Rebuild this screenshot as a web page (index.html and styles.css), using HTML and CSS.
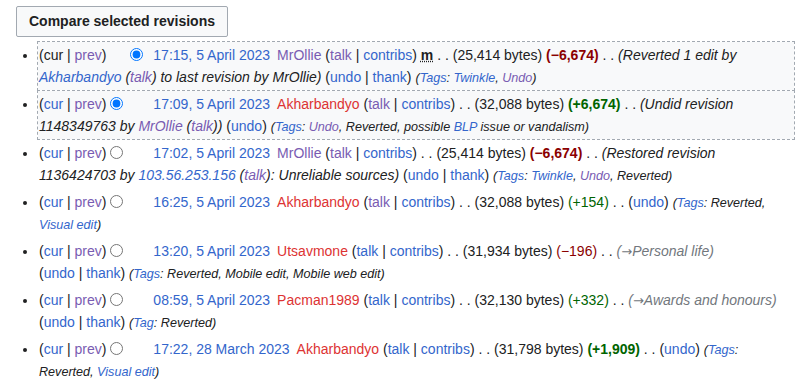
FILE: index.html
```html
<!DOCTYPE html>
<html lang="en">
<head>
	<meta charset="UTF-8">
	<meta name="viewport" content="width=device-width, initial-scale=1.0">
	<title>Revision history</title>
	<link rel="stylesheet" href="styles.css">
</head>
<body>
	<form class="historico">
		<button type="button" class="btn-comparar">Compare selected revisions</button>
		<ul class="revisoes">
			<li class="selecionada">
				(cur | <a class="vis">prev</a>)<input type="radio" name="oldid" class="oculto"><input type="radio" name="diff" checked>
				<a class="data">17:15, 5 April 2023</a><span class="usuario"><a class="vis">MrOllie</a> (<a class="vis">talk</a> | <a>contribs</a>)</span>
				<abbr class="menor">m</abbr> . . (25,414 bytes) <strong class="menos">(−6,674)</strong> . .
				<span class="comentario">(Reverted 1 edit by <a>Akharbandyo</a> (<a class="vis">talk</a>) to last revision by MrOllie)</span>
				<span class="desfazer">(<a>undo</a> | <a>thank</a>)</span>
				<span class="tags">(<a>Tags</a>: <a>Twinkle</a>, <a class="vis">Undo</a>)</span>
			</li>
			<li class="selecionada">
				(<a>cur</a> | <a class="vis">prev</a>)<input type="radio" name="oldid" checked><input type="radio" name="diff" class="oculto">
				<a class="data">17:09, 5 April 2023</a><span class="usuario"><a class="novo">Akharbandyo</a> (<a class="vis">talk</a> | <a>contribs</a>)</span>
				. . (32,088 bytes) <strong class="mais">(+6,674)</strong> . .
				<span class="comentario">(Undid revision 1148349763 by <a class="vis">MrOllie</a> (<a class="vis">talk</a>))</span>
				<span class="desfazer">(<a>undo</a>)</span>
				<span class="tags">(<a>Tags</a>: <a class="vis">Undo</a>, Reverted, possible <a>BLP</a> issue or vandalism)</span>
			</li>
			<li>
				(<a>cur</a> | <a class="vis">prev</a>)<input type="radio" name="oldid"><input type="radio" name="diff" class="oculto">
				<a class="data">17:02, 5 April 2023</a><span class="usuario"><a class="vis">MrOllie</a> (<a class="vis">talk</a> | <a>contribs</a>)</span>
				. . (25,414 bytes) <strong class="menos">(−6,674)</strong> . .
				<span class="comentario">(Restored revision 1136424703 by <a>103.56.253.156</a> (<a class="vis">talk</a>): Unreliable sources)</span>
				<span class="desfazer">(<a>undo</a> | <a>thank</a>)</span>
				<span class="tags">(<a>Tags</a>: <a>Twinkle</a>, <a class="vis">Undo</a>, Reverted)</span>
			</li>
			<li>
				(<a>cur</a> | <a class="vis">prev</a>)<input type="radio" name="oldid"><input type="radio" name="diff" class="oculto">
				<a class="data">16:25, 5 April 2023</a><span class="usuario"><a class="novo">Akharbandyo</a> (<a class="vis">talk</a> | <a>contribs</a>)</span>
				. . (32,088 bytes) <span class="mais">(+154)</span> . .
				<span class="desfazer">(<a>undo</a>)</span>
				<span class="tags">(<a>Tags</a>: Reverted, <a>Visual edit</a>)</span>
			</li>
			<li>
				(<a>cur</a> | <a class="vis">prev</a>)<input type="radio" name="oldid"><input type="radio" name="diff" class="oculto">
				<a class="data">13:20, 5 April 2023</a><span class="usuario"><a class="novo">Utsavmone</a> (<a>talk</a> | <a>contribs</a>)</span>
				. . (31,934 bytes) <span class="menos">(−196)</span> . .
				<span class="comentario auto">(<a class="seta">→</a>Personal life)</span>
				<span class="desfazer">(<a>undo</a> | <a>thank</a>)</span>
				<span class="tags">(<a>Tags</a>: Reverted, Mobile edit, Mobile web edit)</span>
			</li>
			<li>
				(<a>cur</a> | <a class="vis">prev</a>)<input type="radio" name="oldid"><input type="radio" name="diff" class="oculto">
				<a class="data">08:59, 5 April 2023</a><span class="usuario"><a class="novo">Pacman1989</a> (<a>talk</a> | <a>contribs</a>)</span>
				. . (32,130 bytes) <span class="mais">(+332)</span> . .
				<span class="comentario auto">(<a class="seta">→</a>Awards and honours)</span>
				<span class="desfazer">(<a>undo</a> | <a>thank</a>)</span>
				<span class="tags">(<a>Tag</a>: Reverted)</span>
			</li>
			<li>
				(<a>cur</a> | <a class="vis">prev</a>)<input type="radio" name="oldid"><input type="radio" name="diff" class="oculto">
				<a class="data">17:22, 28 March 2023</a><span class="usuario"><a class="novo">Akharbandyo</a> (<a>talk</a> | <a>contribs</a>)</span>
				. . (31,798 bytes) <strong class="mais">(+1,909)</strong> . .
				<span class="desfazer">(<a>undo</a>)</span>
				<span class="tags">(<a>Tags</a>: Reverted, <a>Visual edit</a>)</span>
			</li>
		</ul>
	</form>
</body>
</html>
```

FILE: styles.css
```css
* {
	box-sizing: border-box;
}
body {
	margin: 0;
	padding: 6px 16px 0;
	font-family: "Liberation Sans", Arial, sans-serif;
	font-size: 14px;
	color: #202122;
	background-color: white;
}
a {
	color: #3366cc;
	text-decoration: none;
	cursor: pointer;
}
a.vis {
	color: #795cb2;
}
a.novo {
	color: #dd3333;
}
.btn-comparar {
	font-family: inherit;
	font-size: 14px;
	font-weight: bold;
	line-height: 21px;
	color: #202122;
	background-color: #f8f9fa;
	border: 1px solid #a2a9b1;
	border-radius: 2px;
	padding: 4px 12px;
}
.revisoes {
	margin: 5px 0 0;
	padding-left: 22px;
	list-style: disc;
}
.revisoes li {
	line-height: 22px;
	border: 1px solid transparent;
	padding: 1px 0;
	margin-bottom: 1px;
}
.revisoes li.selecionada {
	background-color: #f8f9fa;
	outline: 1px dashed #a2a9b1;
}
.revisoes input[type="radio"] {
	width: 13px;
	height: 13px;
	margin: 0 0 0 4px;
	vertical-align: -1px;
}
.revisoes input[type="radio"] + input[type="radio"] {
	margin-left: 7px;
	margin-right: 6px;
}
.oculto {
	visibility: hidden;
}
.usuario {
	margin-left: 7px;
}
.menor {
	font-weight: bold;
	text-decoration: underline dotted;
}
.menos {
	color: #8b0000;
}
.mais {
	color: #006400;
}
.comentario {
	font-style: italic;
}
.comentario.auto {
	color: #72777d;
}
.comentario.auto a {
	color: #72777d;
}
.seta {
	font-family: "DejaVu Sans", sans-serif;
	font-style: normal;
	font-size: 13px;
	line-height: 14px;
}
.desfazer {
	white-space: nowrap;
}
.tags {
	font-style: italic;
	font-size: 90%;
	line-height: 16px;
}
```
